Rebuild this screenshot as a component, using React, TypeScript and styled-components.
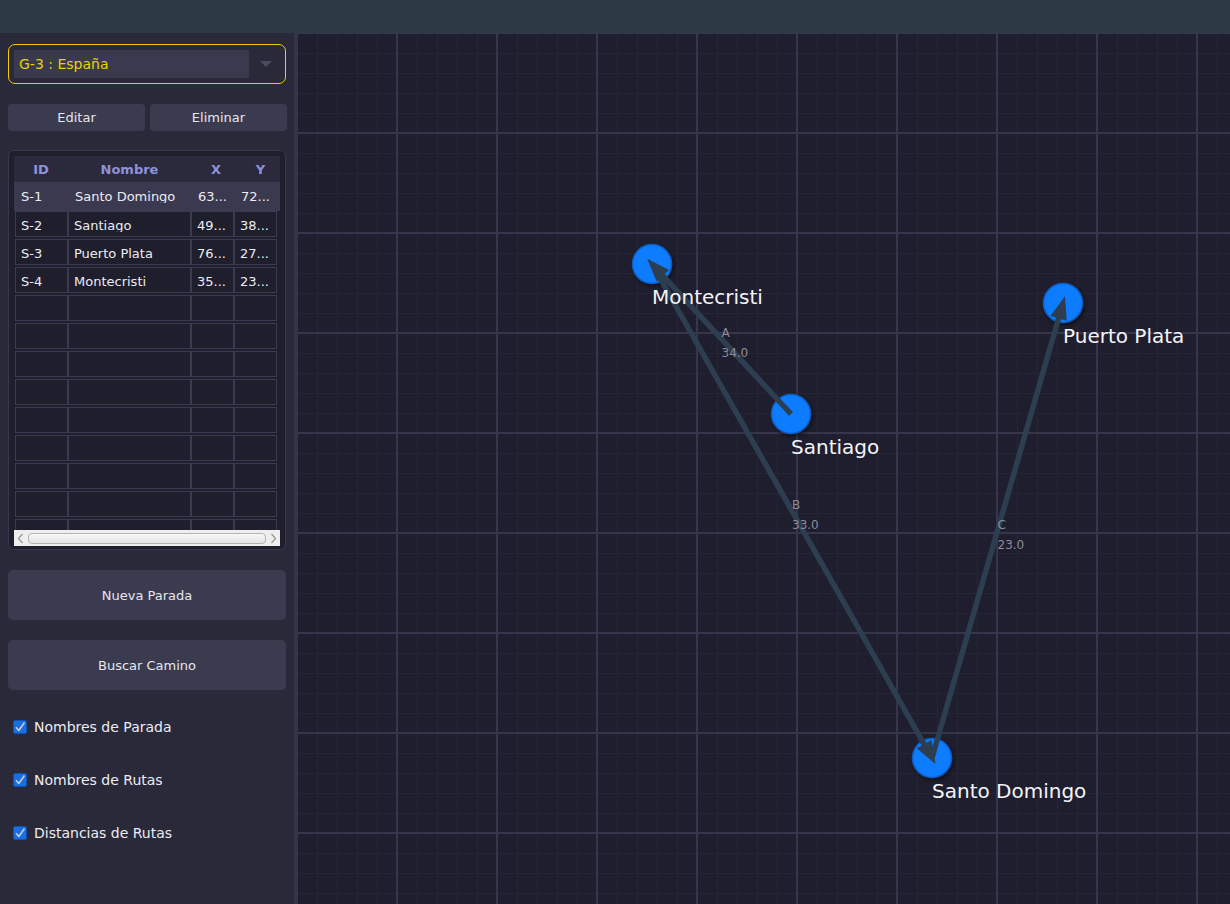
import React from "react";
import styled, { createGlobalStyle } from "styled-components";

const GlobalStyle = createGlobalStyle`
  html, body { margin: 0; padding: 0; background: #1f1e2e; }
  body { font-family: "DejaVu Sans", "Noto Sans", sans-serif; }
  * { box-sizing: border-box; }
`;

const stops = [
  { id: "S-1", name: "Santo Domingo", x: 635, y: 725, xs: "63...", ys: "72..." },
  { id: "S-2", name: "Santiago", x: 494, y: 381, xs: "49...", ys: "38..." },
  { id: "S-3", name: "Puerto Plata", x: 766, y: 270, xs: "76...", ys: "27..." },
  { id: "S-4", name: "Montecristi", x: 355, y: 231, xs: "35...", ys: "23..." },
];

const routes = [
  { name: "A", from: "S-2", to: "S-4", dist: "34.0" },
  { name: "B", from: "S-4", to: "S-1", dist: "33.0" },
  { name: "C", from: "S-1", to: "S-3", dist: "23.0" },
];

const options = ["Nombres de Parada", "Nombres de Rutas", "Distancias de Rutas"];

const Page = styled.div`
  width: 1230px;
  height: 904px;
  display: flex;
  flex-direction: column;
  overflow: hidden;
`;

const TopBar = styled.div`
  height: 33px;
  flex: none;
  background: #2d3a45;
`;

const Body = styled.div`
  flex: 1;
  display: flex;
  min-height: 0;
`;

const Sidebar = styled.aside`
  width: 294px;
  flex: none;
  background: #2a2939;
  padding: 11px 7px 0 8px;
  display: flex;
  flex-direction: column;
`;

const Divider = styled.div`
  width: 3px;
  flex: none;
  background: #34334a;
`;

const Combo = styled.div`
  height: 40px;
  width: 278px;
  border: 1px solid #f2cc00;
  border-radius: 7px;
  padding: 5px;
  display: flex;
  align-items: center;
`;

const ComboField = styled.div`
  width: 235px;
  height: 28px;
  background: #3a3a4f;
  color: #e8d200;
  font-size: 14px;
  padding-left: 5px;
  display: flex;
  align-items: center;
`;

const ComboArrow = styled.div`
  flex: 1;
  display: flex;
  justify-content: center;
  padding-left: 2px;
`;

const ButtonPair = styled.div`
  margin-top: 20px;
  display: grid;
  grid-template-columns: 137px 137px;
  gap: 5px;
`;

const Button = styled.button<{ $tall?: boolean }>`
  height: ${(p) => (p.$tall ? "50px" : "27px")};
  width: ${(p) => (p.$tall ? "278px" : "auto")};
  margin-top: ${(p) => (p.$tall ? "20px" : "0")};
  background: #3b3b50;
  border: none;
  border-radius: ${(p) => (p.$tall ? "5px" : "4px")};
  color: #e6e6ee;
  font-family: "DejaVu Sans", sans-serif;
  font-size: 13px;
  padding: 0;
`;

const TablePanel = styled.div`
  margin-top: 19px;
  width: 278px;
  height: 400px;
  border: 1px solid #38374b;
  border-radius: 6px;
  background: #1f1e2d;
  padding: 5px 5px 3px 5px;
  display: flex;
  flex-direction: column;
`;

const HeaderRow = styled.div`
  height: 26px;
  flex: none;
  background: #2b2a3d;
  display: grid;
  grid-template-columns: 54px 123px 50px 39px;
  align-items: center;
`;

const HeaderCell = styled.div`
  text-align: center;
  color: #8e92dc;
  font-weight: bold;
  font-size: 13px;
`;

const Rows = styled.div`
  flex: 1;
  overflow: hidden;
  min-height: 0;
`;

const Row = styled.div<{ $selected?: boolean }>`
  display: grid;
  grid-template-columns: ${(p) => (p.$selected ? "54px 123px 43px 43px" : "53px 123px 43px 43px")};
  height: ${(p) => (p.$selected ? "29px" : "28px")};
  padding-left: ${(p) => (p.$selected ? "0" : "1px")};
  background: ${(p) => (p.$selected ? "#3a394f" : "transparent")};
`;

const Cell = styled.div<{ $selected?: boolean }>`
  height: ${(p) => (p.$selected ? "28px" : "26px")};
  border: ${(p) => (p.$selected ? "none" : "1px solid #3b3a50")};
  padding: ${(p) => (p.$selected ? "7px 0 0 7px" : "6px 0 0 5px")};
  color: #ececf2;
  font-size: 13px;
  overflow: hidden;
`;

const CellText = styled.span`
  display: block;
  height: 14px;
  line-height: 15px;
  overflow: hidden;
  white-space: nowrap;
`;

const HScroll = styled.div`
  height: 16px;
  flex: none;
  background: #eeeeee;
  display: flex;
  align-items: center;
  padding: 0 3px;
  gap: 4px;
`;

const Thumb = styled.div`
  flex: 1;
  height: 11px;
  border: 1px solid #b4b4b4;
  border-radius: 4px;
  background: linear-gradient(#f8f8f8, #e4e4e4);
`;

const Checks = styled.div`
  margin-top: 10px;
  display: flex;
  flex-direction: column;
`;

const CheckRow = styled.label`
  height: 53px;
  display: flex;
  align-items: center;
  gap: 7px;
  padding-left: 5px;
  color: #ececf2;
  font-size: 14px;
`;

const Box = styled.span`
  width: 14px;
  height: 14px;
  border-radius: 2px;
  background: #1a6fe0;
  border: 1px solid #0d52b4;
  display: flex;
  align-items: center;
  justify-content: center;
`;

const Canvas = styled.main`
  flex: 1;
  background-color: #1f1e2e;
  background-image:
    linear-gradient(to right, #36354b 2px, transparent 2px),
    linear-gradient(to bottom, #36354b 2px, transparent 2px),
    linear-gradient(to right, #262536 1px, transparent 1px),
    linear-gradient(to bottom, #262536 1px, transparent 1px);
  background-size: 100px 100px, 100px 100px, 20px 20px, 20px 20px;
  background-position: -1px -1px, -1px -1px, 0 0, 0 0;
  overflow: hidden;
`;

const Graph = styled.svg`
  display: block;
  font-family: "DejaVu Sans", sans-serif;
`;

function Check() {
  return (
    <svg width="12" height="12" viewBox="0 0 12 12">
      <path d="M2 6.2 L4.8 9.5 L10.5 1.5" fill="none" stroke="#c8ccd6" strokeWidth="1.6" strokeLinejoin="round" />
    </svg>
  );
}

function Chevron({ right }: { right?: boolean }) {
  return (
    <svg width="7" height="11" viewBox="0 0 7 11">
      <path d={right ? "M1.5 1 L5.5 5.5 L1.5 10" : "M5.5 1 L1.5 5.5 L5.5 10"} fill="none" stroke="#9a9a9a" strokeWidth="1.3" />
    </svg>
  );
}

function Route({ r }: { r: (typeof routes)[number] }) {
  const a = stops.find((s) => s.id === r.from)!;
  const b = stops.find((s) => s.id === r.to)!;
  const dx = b.x - a.x, dy = b.y - a.y;
  const len = Math.hypot(dx, dy);
  const ux = dx / len, uy = dy / len;
  const tipX = b.x + ux * 7, tipY = b.y + uy * 7;
  const baseX = tipX - ux * 23, baseY = tipY - uy * 23;
  const px = -uy * 8.5, py = ux * 8.5;
  const head = `${tipX},${tipY} ${baseX + px},${baseY + py} ${baseX - px},${baseY - py}`;
  return (
    <g>
      <line x1={a.x} y1={a.y} x2={b.x - ux * 6} y2={b.y - uy * 6} stroke="#2c3e50" strokeWidth="5.5" />
      <polygon points={head} fill="#2c3e50" />
    </g>
  );
}

function RouteLabel({ r }: { r: (typeof routes)[number] }) {
  const a = stops.find((s) => s.id === r.from)!;
  const b = stops.find((s) => s.id === r.to)!;
  const mx = (a.x + b.x) / 2, my = (a.y + b.y) / 2;
  return (
    <g fill="#8c8c99" fontSize="12">
      <text x={mx} y={my - 2}>{r.name}</text>
      <text x={mx} y={my + 18}>{r.dist}</text>
    </g>
  );
}

export default function App() {
  const empties = Array.from({ length: 9 });
  return (
    <Page>
      <GlobalStyle />
      <TopBar />
      <Body>
        <Sidebar>
          <Combo>
            <ComboField>G-3 : España</ComboField>
            <ComboArrow>
              <svg width="12" height="7" viewBox="0 0 12 7">
                <path d="M0 0 L12 0 L6 6 Z" fill="#4b4b60" />
              </svg>
            </ComboArrow>
          </Combo>
          <ButtonPair>
            <Button>Editar</Button>
            <Button>Eliminar</Button>
          </ButtonPair>
          <TablePanel>
            <HeaderRow>
              <HeaderCell>ID</HeaderCell>
              <HeaderCell>Nombre</HeaderCell>
              <HeaderCell>X</HeaderCell>
              <HeaderCell>Y</HeaderCell>
            </HeaderRow>
            <Rows>
              {stops.map((s, i) => (
                <Row key={s.id} $selected={i === 0}>
                  {[s.id, s.name, s.xs, s.ys].map((v, j) => (
                    <Cell key={j} $selected={i === 0}>
                      <CellText>{v}</CellText>
                    </Cell>
                  ))}
                </Row>
              ))}
              {empties.map((_, i) => (
                <Row key={"e" + i}>
                  <Cell />
                  <Cell />
                  <Cell />
                  <Cell />
                </Row>
              ))}
            </Rows>
            <HScroll>
              <Chevron />
              <Thumb />
              <Chevron right />
            </HScroll>
          </TablePanel>
          <Button $tall>Nueva Parada</Button>
          <Button $tall>Buscar Camino</Button>
          <Checks>
            {options.map((o) => (
              <CheckRow key={o}>
                <Box>
                  <Check />
                </Box>
                {o}
              </CheckRow>
            ))}
          </Checks>
        </Sidebar>
        <Divider />
        <Canvas>
          <Graph width="933" height="871">
            <defs>
              <filter id="shadow" x="-50%" y="-50%" width="200%" height="200%">
                <feDropShadow dx="1.5" dy="2" stdDeviation="2" floodColor="#000" floodOpacity="0.55" />
              </filter>
            </defs>
            {stops.map((s) => (
              <circle key={s.id} cx={s.x} cy={s.y} r="19.5" fill="#0a7cff" stroke="#0b5cc2" strokeWidth="1.5" filter="url(#shadow)" />
            ))}
            {routes.map((r) => (
              <Route key={r.name} r={r} />
            ))}
            {stops.map((s) => (
              <text key={s.id} x={s.x} y={s.y + 40} fill="#f4f4f8" fontSize="20">
                {s.name}
              </text>
            ))}
            {routes.map((r) => (
              <RouteLabel key={r.name} r={r} />
            ))}
          </Graph>
        </Canvas>
      </Body>
    </Page>
  );
}
